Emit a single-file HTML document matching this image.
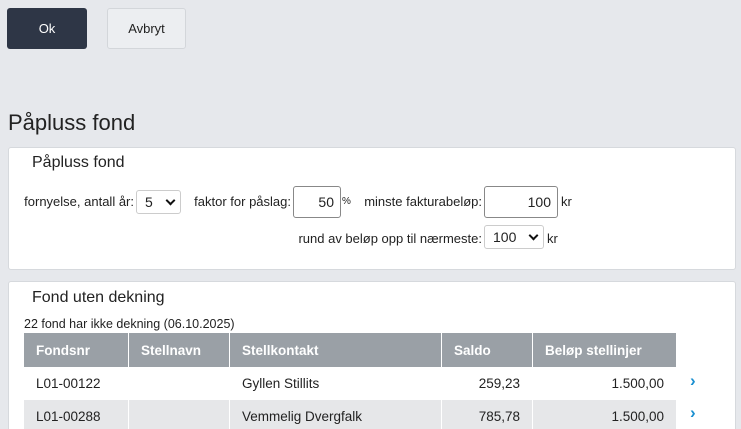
<!DOCTYPE html><html><head><style>
html,body{margin:0;width:741px;height:429px;overflow:hidden}
body{background:#e6e8ec;font-family:"Liberation Sans",sans-serif;color:#222;position:relative}
.a{position:absolute}
.btn{position:absolute;top:8px;height:41px;border-radius:3px;font-size:13px;display:flex;align-items:center;justify-content:center}
.card{position:absolute;left:8px;width:726px;background:#fff;border:1px solid #d6d9dd;border-radius:3px}
.t{font-size:13px;white-space:nowrap}
.r{position:absolute;font-size:13px;white-space:nowrap;text-align:right}
.inp{position:absolute;border:1px solid #888;border-radius:3px;background:#fff;font-size:14px;text-align:right;box-sizing:border-box;padding-right:6px;line-height:30px;height:32px}
.sel{position:absolute;border:1px solid #ccc;border-radius:3px;background:#fff;font-size:14px;box-sizing:border-box;height:24px;line-height:22px;padding-left:8px}
.sel:after{content:"";position:absolute;right:6px;top:6px;width:5px;height:5px;border-right:2px solid #111;border-bottom:2px solid #111;transform:rotate(45deg)}
table{position:absolute;left:24px;top:333px;border-collapse:collapse;font-size:13.5px;width:652px}
th{background:#9aa0a6;color:#fff;text-align:left;height:34px;padding:0 0 0 12px;font-weight:bold;border-left:1px solid #fff}
td{height:33px;padding:0 12px;border-left:1px solid #fff}
tr.g td{background:#e6e7e9}
.ch{position:absolute;left:690px;color:#1a8fd0;font-weight:bold;font-size:17px}
</style></head><body>
<div class="btn" style="left:7px;width:80px;background:#2e3646;color:#fff">Ok</div>
<div class="btn" style="left:107px;width:79px;background:#eceef1;border:1px solid #d3d6da;box-sizing:border-box">Avbryt</div>
<div class="a" style="left:8px;top:110px;font-size:22px">Påpluss fond</div>
<div class="card" style="top:147px;height:121px"></div>
<div class="a" style="left:32px;top:154px;font-size:16px">Påpluss fond</div>
<div class="r" style="right:607px;top:194px">fornyelse, antall år:</div>
<div class="sel" style="left:136px;top:190px;width:45px">5</div>
<div class="r" style="right:450px;top:194px">faktor for påslag:</div>
<div class="inp" style="left:293px;top:186px;width:48px">50</div>
<div class="a" style="left:342px;top:196px;font-size:10px">%</div>
<div class="r" style="right:259px;top:194px">minste fakturabeløp:</div>
<div class="inp" style="left:484px;top:186px;width:74px">100</div>
<div class="a t" style="left:561px;top:194px">kr</div>
<div class="r" style="right:259px;top:231px">rund av beløp opp til nærmeste:</div>
<div class="sel" style="left:484px;top:225px;width:60px">100</div>
<div class="a t" style="left:547px;top:231px">kr</div>
<div class="card" style="top:281px;height:160px"></div>
<div class="a" style="left:32px;top:289px;font-size:16px">Fond uten dekning</div>
<div class="a" style="left:24px;top:317px;font-size:12.5px">22 fond har ikke dekning (06.10.2025)</div>
<table>
<tr><th style="width:92px;border-left:0">Fondsnr</th><th style="width:88px">Stellnavn</th><th style="width:199px">Stellkontakt</th><th style="width:78px">Saldo</th><th>Beløp stellinjer</th></tr>
<tr><td style="border-left:0">L01-00122</td><td></td><td>Gyllen Stillits</td><td style="text-align:right">259,23</td><td style="text-align:right">1.500,00</td></tr>
<tr class="g"><td style="border-left:0">L01-00288</td><td></td><td>Vemmelig Dvergfalk</td><td style="text-align:right">785,78</td><td style="text-align:right">1.500,00</td></tr>
</table>
<div class="ch" style="top:371px">›</div>
<div class="ch" style="top:403px">›</div>
</body></html>
